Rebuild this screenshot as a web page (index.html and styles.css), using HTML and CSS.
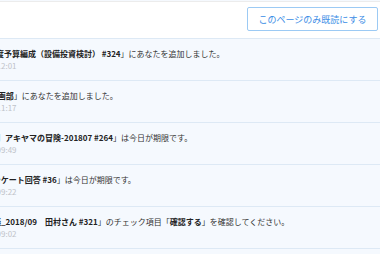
FILE: index.html
```html
<!DOCTYPE html>
<html lang="ja">
<head>
  <meta charset="UTF-8" />
  <meta name="viewport" content="width=device-width, initial-scale=1" />
  <title>お知らせ</title>
  <link rel="stylesheet" href="styles.css">
</head>
<body>
  <header class="toolbar">
    <button class="mark-read" type="button">このページのみ既読にする</button>
  </header>

  <ul class="notices">
    <li class="notice">
      <div class="notice-body">
        <p class="notice-title">「<b>2018年度予算編成（設備投資検討） #324</b>」にあなたを追加しました。</p>
        <p class="notice-time">08月20日 12:01</p>
      </div>
    </li>
    <li class="notice">
      <div class="notice-body">
        <p class="notice-title">「<b>第2課企画部</b>」にあなたを追加しました。</p>
        <p class="notice-time">08月20日 11:17</p>
      </div>
    </li>
    <li class="notice">
      <div class="notice-body">
        <p class="notice-title">「<b>【要対応】アキヤマの冒険-201807 #264</b>」は今日が期限です。</p>
        <p class="notice-time">08月20日 09:49</p>
      </div>
    </li>
    <li class="notice">
      <div class="notice-body">
        <p class="notice-title">「<b>社内アンケート回答 #36</b>」は今日が期限です。</p>
        <p class="notice-time">08月20日 09:22</p>
      </div>
    </li>
    <li class="notice">
      <div class="notice-body">
        <p class="notice-title">「<b>定例会議_2018/09　田村さん #321</b>」のチェック項目「<b>確認する</b>」を確認してください。</p>
        <p class="notice-time">08月20日 09:02</p>
      </div>
    </li>
  </ul>
</body>
</html>
```

FILE: styles.css
```css
:root {
  --blue: #3b8de6;
  --blue-border: #9ccaf4;
  --row-bg: #f5f9fe;
  --row-line: #dde9f5;
  --text: #333;
  --muted: #bfc3c9;
}
body {
  margin: 0;
  background: var(--row-bg);
  font-family: "Noto Sans CJK JP", "Noto Sans", sans-serif;
  color: var(--text);
  overflow: hidden;
}
.toolbar {
  height: 31px;
  background: #fff;
  border-top: 1px solid #ececec;
  border-bottom: 1px solid var(--row-line);
  margin-top: 1px;
  padding: 5px 2px 0 0;
  display: flex;
  justify-content: flex-end;
  align-items: flex-start;
}
.mark-read {
  width: 131px;
  height: 24px;
  padding: 0;
  background: #fff;
  border: 1px solid var(--blue-border);
  border-radius: 2px;
  color: var(--blue);
  font-family: inherit;
  font-size: 9px;
  cursor: pointer;
}
.notices {
  list-style: none;
  margin: 0;
  padding: 0;
}
.notice {
  height: 41px;
  border-bottom: 1px solid var(--row-line);
  overflow: hidden;
}
.notice-body {
  margin-left: -39px;
  padding-top: 9px;
  white-space: nowrap;
}
.notice-title {
  margin: 0;
  font-size: 8px;
  line-height: 12px;
}
.notice-title b {
  color: #222;
  font-weight: 700;
}
.notice-time {
  margin: 0;
  font-size: 8px;
  line-height: 12px;
  color: var(--muted);
}
```
